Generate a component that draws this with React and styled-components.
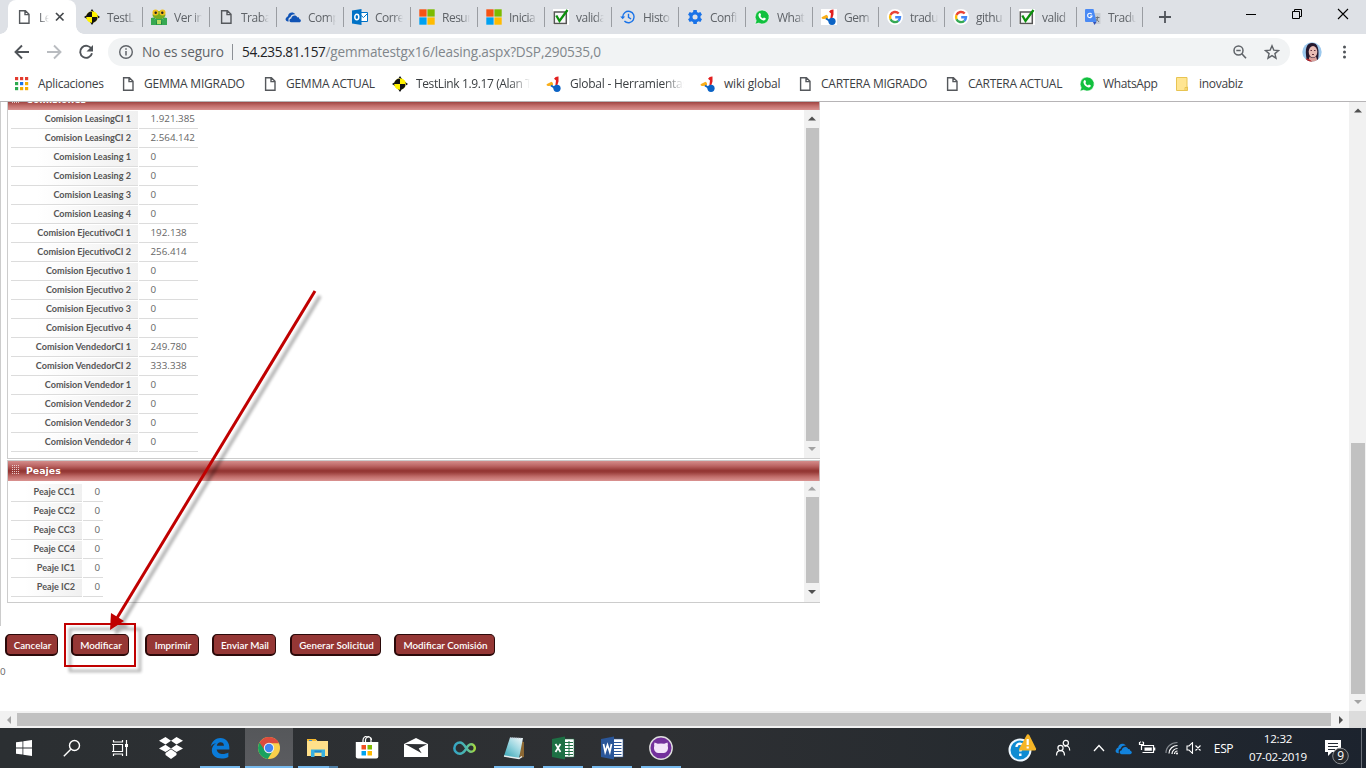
import React from "react";
import styled, { createGlobalStyle, css } from "styled-components";

const GlobalStyle = createGlobalStyle`
  * { box-sizing: border-box; }
  html, body { margin: 0; padding: 0; }
  body { width: 1366px; height: 768px; overflow: hidden; background: #fff; }
  svg { display: block; flex: none; }
`;

const ui = `"Open Sans", "Noto Sans", sans-serif`;

const Screen = styled.div`
  position: relative;
  width: 1366px;
  height: 768px;
  display: flex;
  flex-direction: column;
  font-family: ${ui};
  white-space: nowrap;
  overflow: hidden;
`;

/* ---------- browser chrome ---------- */
const TabStrip = styled.div`
  display: flex;
  height: 34px;
  padding-left: 8px;
  background: #dee1e6;
`;
const Tab = styled.div`
  position: relative;
  display: flex;
  align-items: center;
  width: ${(p) => p.$w}px;
  height: 34px;
  padding-left: 8px;
  color: #5f6368;
  ${(p) =>
    p.$active
      ? css`
          background: #fff;
          border-radius: 8px 8px 0 0;
          &::before, &::after {
            content: "";
            position: absolute;
            bottom: 0;
            width: 8px;
            height: 8px;
          }
          &::before { left: -8px; background: radial-gradient(circle at 0 0, transparent 7.5px, #fff 8px); }
          &::after { right: -8px; background: radial-gradient(circle at 100% 0, transparent 7.5px, #fff 8px); }
        `
      : css`
          &::after {
            content: "";
            position: absolute;
            right: 0;
            top: 7px;
            width: 1px;
            height: 20px;
            background: #9a9da2;
          }
        `}
`;
const TabLabel = styled.span`
  width: ${(p) => p.$w || 28}px;
  margin-left: 7px;
  overflow: hidden;
  font-size: 12px;
  letter-spacing: -0.5px;
  mask-image: linear-gradient(to right, #000 ${(p) => (p.$w ? 10 : 68)}%, transparent);
`;
const NewTab = styled.div`
  width: 44px;
  display: flex;
  align-items: center;
  justify-content: center;
`;
const WindowButtons = styled.div`
  display: flex;
  margin-left: auto;
  width: 138px;
  height: 28px;
  align-items: center;
  & > * { width: 46px; }
`;
const Toolbar = styled.div`
  display: flex;
  align-items: center;
  height: 33px;
  padding: 4px 0 1px 14px;
  background: #fff;
`;
const NavIcons = styled.div`
  display: flex;
  gap: 16px;
  width: 94px;
`;
const AddressBar = styled.div`
  display: flex;
  align-items: center;
  width: 1182px;
  height: 28px;
  padding: 0 10px;
  border-radius: 14px;
  background: #f1f3f4;
  font-size: 13.6px;
  line-height: 18px;
`;
const Security = styled.span`
  width: 90px;
  margin-left: 8px;
  padding-bottom: 1px;
  color: #5f6368;
  letter-spacing: -0.12px;
`;
const AddressDivider = styled.span`
  width: 1px;
  height: 16px;
  margin-right: 9px;
  background: #8c9095;
`;
const Host = styled.span`
  padding-bottom: 1px;
  color: #202124;
  letter-spacing: -0.38px;
`;
const Path = styled.span`
  padding-bottom: 1px;
  color: #80868b;
  letter-spacing: -0.155px;
`;
const AddressActions = styled.div`
  display: flex;
  gap: 16px;
  margin-left: auto;
`;
const Avatar = styled.div`
  margin-left: 12px;
`;
const MenuDots = styled.div`
  margin-left: 14px;
`;
const Bookmarks = styled.div`
  display: flex;
  align-items: center;
  height: 35px;
  padding: 0 0 1px 14px;
  border-bottom: 1px solid #b6b4b6;
  background: #fff;
`;
const Bookmark = styled.div`
  display: flex;
  align-items: center;
  gap: 8px;
  width: ${(p) => p.$w}px;
  font-size: 12px;
  color: #3c4043;
  letter-spacing: ${(p) => p.$track}px;
`;
const BookmarkText = styled.span`
  ${(p) =>
    p.$clip &&
    css`
      width: 114px;
      overflow: hidden;
      mask-image: linear-gradient(to right, #000 82%, transparent);
    `}
`;

/* ---------- page ---------- */
const Viewport = styled.div`
  display: flex;
  height: 609px;
`;
const Page = styled.div`
  width: 1349px;
  height: 609px;
  overflow: hidden;
`;
const PanelArea = styled.div`
  height: 524px;
  padding-left: 6px;
  border-left: 1px solid #ccc;
  overflow: hidden;
`;
const Panel = styled.section`
  width: 813px;
  margin-top: ${(p) => p.$shift}px;
  border: 1px solid #ccc;
  border-right: 0;
`;
const PanelHeader = styled.header`
  display: flex;
  align-items: center;
  gap: 7px;
  height: 20px;
  padding: 0 0 0 4px;
  border-right: 1px solid #c9b5b5;
  background: linear-gradient(#d48d8b, #bb6462 25%, #943633 48%, #963936 55%, #c06c69 78%, #da9391);
  color: #fff;
  font: bold 9.4px/18px "DejaVu Sans", sans-serif;
`;
const PanelBody = styled.div`
  display: flex;
  justify-content: space-between;
  height: ${(p) => p.$h}px;
`;
const Fields = styled.div`
  padding: ${(p) => p.$top}px 0 0 3px;
`;
const Field = styled.div`
  display: flex;
  gap: 1px;
  padding-top: 1px;
`;
const FieldLabel = styled.div`
  width: ${(p) => p.$w}px;
  height: 18px;
  padding-right: 7px;
  border-bottom: 1px solid #dcdcdc;
  background: linear-gradient(to right, #fff 20%, #f0f0f0);
  color: #555;
  font: bold 9.1px/16px Lato, sans-serif;
  text-align: right;
`;
const FieldValue = styled.div`
  width: ${(p) => p.$w}px;
  height: 18px;
  padding-left: 11.5px;
  border-bottom: 1px solid #dcdcdc;
  color: #666;
  font-size: 9.8px;
  line-height: 16px;
`;
const ButtonRow = styled.div`
  display: flex;
  height: 38px;
  padding: 8px 0 0 5px;
`;
const ActionButton = styled.button`
  width: ${(p) => p.$w}px;
  height: 22px;
  margin: 0 ${(p) => p.$gap}px 0 0;
  padding: 1px 0 0 1px;
  border: 1px solid #2a0909;
  border-width: 1px 1px 2px 2px;
  border-radius: 5px;
  background: #953735;
  color: #fff;
  font: 600 9.8px/17px Lato, sans-serif;
  white-space: nowrap;
`;
const Footnote = styled.div`
  color: #666;
  font-size: 9.8px;
  line-height: 15px;
`;

/* ---------- scrollbars ---------- */
const Track = styled.div`
  display: flex;
  flex: none;
  flex-direction: ${(p) => (p.$horizontal ? "row" : "column")};
  ${(p) => (p.$horizontal ? "height" : "width")}: ${(p) => p.$size}px;
  background: #f1f1f1;
`;
const ArrowBox = styled.div`
  display: flex;
  align-items: center;
  justify-content: center;
  flex: none;
  ${(p) => (p.$horizontal ? "width" : "height")}: ${(p) => p.$len}px;
`;
const Thumb = styled.div`
  flex: none;
  background: #c1c1c1;
  ${(p) =>
    p.$horizontal
      ? css`margin: 2px 0 2px ${p.$offset}px; width: ${p.$len}px;`
      : css`margin: ${p.$offset}px 1px 0 2px; height: ${p.$len}px;`}
`;
const Filler = styled.div`
  flex: 1;
`;
const BottomBar = styled.div`
  display: flex;
  height: 17px;
  & > :first-child { flex: 1; }
`;
const Corner = styled.div`
  width: 17px;
  background: #dcdcdc;
`;

const arrows = {
  up: "M0 5.500 4 1.500 8 5.500Z",
  down: "M0 1 4 5 8 1Z",
  left: "M6 0 2 4 6 8Z",
  right: "M2 0 6 4 2 8Z",
};
function Arrow({ dir, dark }) {
  return (
    <svg width="8" height="8" viewBox="0 0 8 8">
      <path d={arrows[dir]} fill={dark ? "#505050" : "#a3a3a3"} />
    </svg>
  );
}
function Scrollbar({ horizontal, size, len, offset = 0, startDark, endDark, box = 17, endBox = 17 }) {
  return (
    <Track $horizontal={horizontal} $size={size}>
      <ArrowBox $horizontal={horizontal} $len={box}>
        <Arrow dir={horizontal ? "left" : "up"} dark={startDark} />
      </ArrowBox>
      <Thumb $horizontal={horizontal} $len={len} $offset={offset} />
      <Filler />
      <ArrowBox $horizontal={horizontal} $len={endBox}>
        <Arrow dir={horizontal ? "right" : "down"} dark={endDark} />
      </ArrowBox>
    </Track>
  );
}

/* ---------- site icons ---------- */
const Icon16 = ({ children, size = 16, box = 16 }) => (
  <svg width={size} height={size} viewBox={`0 0 ${box} ${box}`}>{children}</svg>
);
const DocIcon = () => (
  <Icon16>
    <path d="M3.6 1.7h5.8l3.6 3.6v8.900H3.600zM9 1.900v3.700h3.800" fill="none" stroke="#55585c" strokeWidth="1.400" />
  </Icon16>
);
const TargetIcon = () => (
  <Icon16>
    <circle cx="8" cy="8" r="5.800" fill="#fff200" />
    <path d="M8 2.200A5.800 5.800 0 0 0 2.200 8H8zM8 13.800A5.800 5.800 0 0 0 13.800 8H8zM6 3 8 0l2 3zM6 13l2 3 2-3zM3 6 0 8l3 2zM13 6l3 2-3 2z" fill="#111" />
    <path d="M8 .8V8h5.800A5.800 5.800 0 0 0 8 2.200zM8 15.200V8H2.200A5.800 5.800 0 0 0 8 13.800z" fill="#fff200" />
  </Icon16>
);
const FrogIcon = () => (
  <Icon16>
    <path d="M0 9 5 8 3 12 0 13zM16 9 11 8 13 12 16 13zM5 8h6l2 8H3z" fill="#36a852" />
    <path d="M2 15.500 5 10l1 5.500zM14 15.500 11 10l-1 5.500z" fill="#1d7b39" />
    <path d="M0 12 5 10v6H0zM16 12l-5-2v6h5z" fill="#36a852" />
    <ellipse cx="8" cy="6" rx="6.500" ry="4" fill="#76ad20" />
    <circle cx="4.500" cy="3.500" r="3" fill="#f0bf1c" />
    <circle cx="11.500" cy="3.500" r="3" fill="#f0bf1c" />
    <circle cx="4.700" cy="3.700" r="1.200" fill="#222" />
    <circle cx="11.300" cy="3.700" r="1.200" fill="#222" />
    <path d="M6 11h4v4H6z" fill="#b7dd63" />
  </Icon16>
);
const CloudIcon = ({ w = 16, color = "#1053b5" }) => (
  <svg width={w} height={w} viewBox="0 0 16 16">
    <path d="M3 12.500C.6 12.500-.2 10 1.300 8.700c.3-1 1-1.300 1.700-1.300C3 4 7.500 2 10.300 5.200 7.500 5 6 6 5.500 8 3.700 8.500 3 10 3.700 12.500z" fill={color} />
    <path d="M6 13.300c-2.200-.2-2-3.500.3-3.700C6.500 6.300 11 5.200 12.400 8.400c1.600-.2 2 .8 1.900 1.600 2 .3 2.200 3-.2 3.300z" fill={color} />
  </svg>
);
const OutlookIcon = () => (
  <Icon16>
    <path d="M8 3.500h7.500v9H8z" fill="#fff" stroke="#0072c6" />
    <path d="m8.500 6 3 2.500 4-4" fill="none" stroke="#0072c6" />
    <path d="M0 1.500 9.500 0v16L0 14.500z" fill="#0072c6" />
    <ellipse cx="4.800" cy="8" rx="2" ry="2.700" fill="none" stroke="#fff" strokeWidth="1.500" />
  </Icon16>
);
const MicrosoftIcon = () => (
  <Icon16>
    <path d="M.3.300h7.300v7.300H.3z" fill="#f65314" />
    <path d="M8.400.300h7.300v7.300H8.400z" fill="#7cbb00" />
    <path d="M.3 8.400h7.300v7.300H.3z" fill="#00a1f1" />
    <path d="M8.400 8.400h7.300v7.300H8.400z" fill="#ffbb00" />
  </Icon16>
);
const CheckIcon = () => (
  <Icon16>
    <path d="M0 0h16v16H0z" fill="#fff" />
    <path d="M1.300 3h12v11.500h-12z" fill="#f8f8f8" stroke="#555" strokeWidth="1.500" />
    <path d="M3.300 6.500 6.500 12 14.500 1" fill="none" stroke="#0c900c" strokeWidth="2.300" />
  </Icon16>
);
const HistoryIcon = () => (
  <Icon16>
    <path d="M2.700 8a5.700 5.700 0 1 1 1.700 4.100M8.500 4.700v3.700l2.600 1.600" fill="none" stroke="#1a73e8" strokeWidth="1.400" />
    <path d="M.2 7.500h5L2.700 10.200z" fill="#1a73e8" />
  </Icon16>
);
const GearIcon = () => (
  <Icon16 box={24}>
    <path fill="#1a73e8" d="M21.500 13.400a9 9 0 0 0 0-2.800l2.300-1.800-2.400-4.200-2.800 1.100a9 9 0 0 0-2.300-1.300L15.900 1.500h-5l-.5 2.900a9 9 0 0 0-2.300 1.300L5.300 4.600 2.900 8.800l2.300 1.800a9 9 0 0 0 0 2.800l-2.300 1.800 2.400 4.200 2.800-1.100a9 9 0 0 0 2.300 1.300l.5 2.900h5l.4-2.900a9 9 0 0 0 2.300-1.300l2.800 1.100 2.400-4.200zM13.400 15.800a3.800 3.800 0 1 1 0-7.600 3.800 3.800 0 0 1 0 7.600z" transform="translate(-1.300)" />
  </Icon16>
);
const WhatsIcon = () => (
  <Icon16>
    <path d="M8 1a7 7 0 1 1-3.300 13.100L1 15.300l1.200-3.600A7 7 0 0 1 8 1z" fill="#11c03e" stroke="#fff" strokeWidth=".6" />
    <path d="M5.300 4.300c.6-.5 1-.4 1.300.4l.5 1.300-.7 1c.6 1.200 1.300 1.800 2.500 2.400l1-1 1.800.9c.2 2-1.500 2.600-3 2C6.500 10.500 5 9 4.500 6.800c-.2-1 .2-2 .8-2.500z" fill="#fff" />
  </Icon16>
);
const GxIcon = () => (
  <Icon16>
    <path d="M0 0h16v16H0z" fill="#fff" />
    <path d="M8 2.800Q9.500.300 12.500.5v5l-1.300 4-1.800-.5.600-4.500z" fill="#e21f1f" />
    <path d="M1 8 5.500 5.800q2.500 1.200 1 4L2 10Q-.3 9.200 1 8z" fill="#f9ae19" />
    <circle cx="11" cy="12.300" r="3.600" fill="#0b63c5" />
    <path d="m5 9.500 4 2.500" stroke="#0b63c5" strokeWidth="2" />
  </Icon16>
);
const GoogleIcon = () => (
  <Icon16>
    <circle cx="8" cy="8" r="8" fill="#fff" />
    <g fill="none" strokeWidth="2.400">
      <path d="M11.700 4.500A5 5 0 0 0 3.500 6" stroke="#ea4335" />
      <path d="M3.500 6a5 5 0 0 0 0 4.200" stroke="#fbbc05" />
      <path d="M3.500 10.200a5 5 0 0 0 7.800 1.700" stroke="#34a853" />
      <path d="M11.300 11.900A5 5 0 0 0 13 8.300H8.200" stroke="#4285f4" />
    </g>
  </Icon16>
);
const TranslateIcon = () => (
  <Icon16>
    <path d="M6 4h9.500v11H9z" fill="#c9cdd2" />
    <path d="M10.500 8.500h4M12.500 7.500v1.300c0 2-1 3-2 4M11 9.500l3 3.500" stroke="#6f757d" fill="none" />
    <path d="M8 13h3.500L9.500 16z" fill="#3350b5" />
    <path d="M1 0h7.500l3 13H1a1 1 0 0 1-1-1V1a1 1 0 0 1 1-1z" fill="#4a8af4" />
    <path d="M6.700 5.200A2.200 2.200 0 1 0 7 7H5" fill="none" stroke="#fff" strokeWidth="1.100" />
  </Icon16>
);
const AppsIcon = () => (
  <Icon16>
    {["#e33b2e", "#e33b2e", "#e33b2e", "#2da94f", "#1a73e8", "#f5ac00", "#2da94f", "#f5ac00", "#f5ac00"].map((c, i) => (
      <rect key={i} x={1 + (i % 3) * 5} y={1 + Math.floor(i / 3) * 5} width="3.200" height="3.200" fill={c} />
    ))}
  </Icon16>
);
const FolderIcon = () => (
  <Icon16>
    <path d="M1.500 1.500H12v9.500h.5v3.500h-11z" fill="#ffe591" stroke="#e8c452" />
    <path d="M10 14.500v-3h2v3" fill="none" stroke="#e8c452" />
  </Icon16>
);

/* ---------- taskbar ---------- */
const Taskbar = styled.div`
  display: flex;
  height: 40px;
  background: linear-gradient(to right, #2b2f32, #2e3033 48%, #252a2f 75%, #1c232e);
`;
const Task = styled.div`
  position: relative;
  display: flex;
  align-items: center;
  justify-content: center;
  width: ${(p) => p.$w || 49}px;
  height: 40px;
  ${(p) => p.$first && "margin-left: 2px;"}
  ${(p) => p.$active && "background: linear-gradient(#55575a, #5b5c60); width: 48px; margin-left: 1px;"}
  ${(p) =>
    p.$open &&
    css`
      &::after {
        content: "";
        position: absolute;
        left: ${p.$active ? 0 : 5}px;
        right: ${p.$active ? 0 : 4}px;
        bottom: 0;
        height: 2px;
        background: ${p.$split ? "linear-gradient(to right, #76b9ed 31px, #4f7fa6 31px)" : "#76b9ed"};
      }
    `}
`;
const Tray = styled.div`
  display: flex;
  align-items: center;
  margin-left: auto;
  width: 361px;
  color: #fff;
`;
const TrayItem = styled.div`
  display: flex;
  flex: none;
  justify-content: center;
  width: ${(p) => p.$w}px;
  padding-top: ${(p) => p.$drop || 0}px;
  font-size: 12px;
  letter-spacing: -0.4px;
`;
const Clock = styled.div`
  width: 70px;
  text-align: center;
  font-size: 11.6px;
  line-height: 18px;
  letter-spacing: -0.25px;
`;
const ShowDesktop = styled.div`
  width: 5px;
  height: 40px;
  margin-left: auto;
  border-left: 1px solid #6b7079;
`;

const T = ({ w = 24, h = 24, children }) => (
  <svg width={w} height={h} viewBox={`0 0 ${w} ${h}`} fill="none">{children}</svg>
);
const WindowsLogo = () => (
  <T w={16} h={16}><path fill="#fff" d="M0 2.300 6.500 1.400v6.200H0zM7.300 1.300 16 0v7.600H7.300zM0 8.400h6.500v6.200L0 13.700zM7.300 8.400H16V16l-8.700-1.300z" /></T>
);
const SearchGlyph = () => (
  <T w={18} h={18}><circle cx="11.500" cy="6.500" r="5" stroke="#fff" strokeWidth="1.400" /><path d="M7.800 10.200.8 17.200" stroke="#fff" strokeWidth="1.400" /></T>
);
const TaskViewGlyph = () => (
  <T w={18} h={18}><path d="M2.500 5.500h9v7h-9zM2.500 1v2h9V1M2.500 17v-2h9v2M15.500 1v16M1 5.500h2M1 12.500h2" stroke="#fff" strokeWidth="1.200" /><path d="M14 5h3v3h-3z" fill="#fff" /></T>
);
const Dropbox = () => (
  <T><g fill="#fff"><path d="m6.500 1 5.500 3.700L6.500 8.400 0 4.700zM17.500 1 24 4.700l-6.500 3.700L12 4.700zM6.500 8.700l5.500 3.700-5.500 3.700L0 12.400zM17.500 8.700l6.500 3.700-6.500 3.700-5.500-3.700zM6.500 17l5.500-3.700 5.500 3.700v2L12 23l-5.500-4z" /></g></T>
);
const Edge = () => (
  <T><path fill="#0a7bd9" transform="translate(1 1) scale(.94)" d="M1.800 10.500C3 4 7.500 1 12 1c6 0 10.200 4.500 9.700 12.200H8.200c.3 3.400 3.500 4.800 6.400 4.800 2.200 0 4.200-.6 6-1.600v5C18.500 22.500 16 23 13.500 23 7 23 3 19.500 3 14.200c0-3.200 1.700-6 4.500-7.500-3 .5-4.800 2-5.700 3.800zM8.300 9.200h7.600C15.800 6.800 14.600 5.600 12.300 5.600c-2.200 0-3.600 1.500-4 3.600z" /></T>
);
const Chrome = () => (
  <T>
    <circle cx="12" cy="12" r="11" fill="#f9d04b" />
    <path d="M12 12 2.500 6.500a11 11 0 0 0 8.200 16.400L16.500 14z" fill="#19a15f" />
    <path d="M2.500 6.500a11 11 0 0 1 19.500.7H12L7.500 14z" fill="#dc4b3e" />
    <circle cx="12" cy="12" r="5.200" fill="#f1f1f1" /><circle cx="12" cy="12" r="4.200" fill="#4285f4" />
  </T>
);
const Explorer = () => (
  <T><path d="M1 3.500h9l1.500 1.500H22v15H1z" fill="#ffe08a" /><path d="M1 3h9v2H1z" fill="#f5b82e" /><path d="M3 4h3v1H3z" fill="#3a8ed0" /><path d="M5 21v-7.500h14V21h-3.500v-4.500h-7V21z" fill="#38b1e1" /><path d="M8.500 14.500h7v2h-7z" fill="#2187c7" /></T>
);
const Store = () => (
  <T><path d="M8 7V4.200a4 4 0 0 1 8 0V7M10.500 7V4a3 3 0 0 1 6 0" stroke="#fff" strokeWidth="1.200" /><path d="M.8 6h22.500v14.500q0 2-2 2H2.800q-2 0-2-2z" fill="#fff" /><path d="M6.500 9H11v4.500H6.500z" fill="#f25022" /><path d="M12.500 9H17v4.500h-4.500z" fill="#7fba00" /><path d="M6.500 15H11v4.500H6.500z" fill="#00a4ef" /><path d="M12.500 15H17v4.500h-4.500z" fill="#ffb900" /></T>
);
const Mail = () => (
  <T><path d="M0 8 12 2l12 6v13H0z" fill="#fff" /><path d="m1 8 22 .3-8.300 4.200 3 4.700L1 8z" fill="#2e3033" /></T>
);
const Infinity2 = () => (
  <T>
    <defs><linearGradient id="inf" x1="0" x2="1"><stop offset="0" stopColor="#35a5c4" /><stop offset=".6" stopColor="#4fb9ac" /><stop offset="1" stopColor="#a6d93e" /></linearGradient></defs>
    <path d="M12 14.500C10 17 8.800 17.800 7 17.800a5.500 5.500 0 1 1 0-11.300c4.800 0 6.500 9.300 11 9.300a3.800 3.800 0 1 0 0-7.600c-2.500 0-4 2.300-6 6.300z" stroke="url(#inf)" strokeWidth="2.500" />
  </T>
);
const Notepad = () => (
  <T>
    <defs><linearGradient id="np" x1="0" y1="1" x2=".8" y2="0"><stop offset="0" stopColor="#2c9fb0" /><stop offset=".6" stopColor="#9cd7e1" /><stop offset="1" stopColor="#e6f3f5" /></linearGradient></defs>
    <path d="m17 5 5 1v15l-4 1z" fill="#8b6733" /><path d="M8 1.500 21 2l-4 20.500L2 20z" fill="url(#np)" /><path d="m2 20 15 2.500 3-2" stroke="#e8eef0" strokeWidth="1.500" /><path d="m8 2 12 .5" stroke="#ccd" strokeDasharray="1 1" />
  </T>
);
const OfficeIcon = ({ color, letter, children }) => (
  <T><path d="M12 3h11v18H12z" fill="#fff" stroke={color} strokeWidth=".6" />{children}<path d="M1 3 14 .5v23L1 21z" fill={color} /><path d={letter} stroke="#fff" strokeWidth="1.700" /></T>
);
const GitHub = () => (
  <T>
    <circle cx="12" cy="12" r="11.200" fill="#73309c" stroke="#ddd" strokeWidth="1.400" />
    <path d="m5.500 6.500 3.300 1.200q3.200-.5 6.400 0l3.300-1.200q.7 2 .2 3.500c1 2.700-.3 6.700-4 7H9.300c-3.700-.3-5-4.300-4-7q-.5-1.500.2-3.500z" fill="#f3e4fa" />
  </T>
);
const HelpIcon = () => (
  <T w={32} h={30}>
    <circle cx="14" cy="17" r="10.500" fill="#0e8bd2" stroke="#eef8ff" strokeWidth="2" />
    <path d="M10.500 14c0-4.800 7.500-4 6.500 0-.5 2-2.700 2-2.700 4.500M14.300 20.500V23" stroke="#fff" strokeWidth="2.400" />
    <path d="M21 1.500q1.500-1 2.500 1l6.500 13q.5 2-1 2H14q-1.500 0-.8-1.700z" fill="#f6b526" /><path d="M21.700 6v6M21.700 13.500v2" stroke="#fff" strokeWidth="2.200" />
  </T>
);
const People = () => (
  <T w={16} h={18}><g stroke="#fff" strokeWidth="1.200"><circle cx="5.500" cy="9" r="2.600" /><path d="M1.500 16.500c0-6.500 8-6.500 8 0" /><circle cx="10.800" cy="4" r="2.600" /><path d="M9.500 7.500c3-1.500 5.200.5 5.200 4" /></g></T>
);
const Battery = () => (
  <T w={18} h={14}><path d="M4 4.500h11.500v7H4.500M3.500 4v5M1.500 1v2.500h4V1M2.500.5v1M4.800.5v1" stroke="#fff" strokeWidth="1.200" /><path d="M6.500 6.500h7.300v3.200H6.500zM15.500 6.500h1.800v3h-1.800z" fill="#fff" /></T>
);
const Wifi = () => (
  <T w={14} h={14}><g strokeWidth="1.200"><path d="M1 12C1 6 6 1.500 12.500 1.500" stroke="#858a90" /><path d="M4 12.500c0-4.500 4-8 8.500-8M7 13c0-3 2.500-5.500 5.500-5.500M9.500 13c0-1.500 1.500-3 3-3" stroke="#fff" /></g><circle cx="12" cy="12.500" r="1" fill="#fff" /></T>
);
const Mute = () => (
  <T w={16} h={12}><path d="M1 4h2l3.500-3.300v10.600L3 8H1zM9.500 3.500l5 5M14.500 3.500l-5 5" stroke="#fff" strokeWidth="1.100" /></T>
);
const Notice = () => (
  <svg width="26" height="26" viewBox="0 0 26 26">
    <path d="M1 1h16v12H8l-4 4v-4H1z" fill="#fff" /><path d="M4 4.500h10M4 7.500h10M4 10.500h7" stroke="#222933" />
    <circle cx="16.500" cy="17" r="7.800" fill="#26292e" stroke="#8a8d91" />
    <text x="16.500" y="21.300" textAnchor="middle" fontFamily={ui} fontSize="12" fill="#fff">9</text>
  </svg>
);

/* ---------- data ---------- */
const tabs = [
  ["TestLink", TargetIcon], ["Ver inci", FrogIcon], ["Trabajo", DocIcon], ["Compar", CloudIcon], ["Correo", OutlookIcon],
  ["Resum", MicrosoftIcon], ["Inicia", MicrosoftIcon], ["valida", CheckIcon], ["Histo", HistoryIcon], ["Confi", GearIcon],
  ["What", WhatsIcon], ["Gem", GxIcon], ["tradu", GoogleIcon], ["githu", GoogleIcon], ["valid", CheckIcon], ["Tradu", TranslateIcon],
];
const bookmarks = [
  ["Aplicaciones", AppsIcon, 106, -0.3], ["GEMMA MIGRADO", DocIcon, 142, -0.22], ["GEMMA ACTUAL", DocIcon, 130, -0.27],
  ["TestLink 1.9.17 (Alan Tur", TargetIcon, 154, -0.38, true], ["Global - Herramientas", GxIcon, 154, -0.24, true],
  ["wiki global", GxIcon, 97, -0.2], ["CARTERA MIGRADO", DocIcon, 147, -0.25], ["CARTERA ACTUAL", DocIcon, 135, -0.3],
  ["WhatsApp", WhatsIcon, 96, -0.35], ["inovabiz", FolderIcon, 80, -0.3],
];
const comisiones = [
  ["LeasingCI 1", "1.921.385"], ["LeasingCI 2", "2.564.142"], ["Leasing 1", "0"], ["Leasing 2", "0"], ["Leasing 3", "0"], ["Leasing 4", "0"],
  ["EjecutivoCI 1", "192.138"], ["EjecutivoCI 2", "256.414"], ["Ejecutivo 1", "0"], ["Ejecutivo 2", "0"], ["Ejecutivo 3", "0"], ["Ejecutivo 4", "0"],
  ["VendedorCI 1", "249.780"], ["VendedorCI 2", "333.338"], ["Vendedor 1", "0"], ["Vendedor 2", "0"], ["Vendedor 3", "0"], ["Vendedor 4", "0"],
];
const peajes = ["CC1", "CC2", "CC3", "CC4", "IC1", "IC2"];
const buttons = [
  ["Cancelar", 53, 13], ["Modificar", 58, 16], ["Imprimir", 54, 13], ["Enviar Mail", 64, 14], ["Generar Solicitud", 91, 13], ["Modificar Comisión", 101, 0],
];

const Grip = () => (
  <svg width="7" height="12" viewBox="0 0 7 12">
    {[0, 1, 2, 3, 4].flatMap((r) => [0, 1, 2, 3].map((c) => <rect key={`${r}${c}`} x={c * 2} y={r * 2} width="1" height="1" fill="#e9c9c8" />))}
  </svg>
);

function FieldPanel({ title, shift, height, top, labelWidth, valueWidth, rows, scroll }) {
  return (
    <Panel $shift={shift}>
      <PanelHeader><Grip />{title}</PanelHeader>
      <PanelBody $h={height}>
        <Fields $top={top}>
          {rows.map(([label, value]) => (
            <Field key={label}>
              <FieldLabel $w={labelWidth}>{label}</FieldLabel>
              <FieldValue $w={valueWidth}>{value}</FieldValue>
            </Field>
          ))}
        </Fields>
        <Scrollbar size={16} {...scroll} />
      </PanelBody>
    </Panel>
  );
}

const Annotation = styled.svg`
  position: absolute;
  left: 0;
  top: 280px;
  pointer-events: none;
`;

function Callout() {
  return (
    <Annotation width="350" height="410" viewBox="0 280 350 410" fill="none">
      <defs><filter id="soft" x="-20%" y="-20%" width="140%" height="140%"><feGaussianBlur stdDeviation="1.400" /></filter></defs>
      <g transform="translate(5 5)" opacity=".3" filter="url(#soft)">
        <path d="M315 291 117 618" stroke="#000" strokeWidth="3.500" />
        <path d="m110 630 1-17 13 8z" fill="#000" />
        <path d="M65 624h70v42H65z" stroke="#000" strokeWidth="2.500" />
      </g>
      <path d="M315 291 117 618" stroke="#c00000" strokeWidth="3" />
      <path d="m110 630 1-17 13 8z" fill="#c00000" />
      <path d="M65 624h70v42H65z" stroke="#c00000" strokeWidth="2" />
    </Annotation>
  );
}

export default function App() {
  return (
    <Screen>
      <GlobalStyle />
      <TabStrip>
        <Tab $active $w={68}>
          <DocIcon />
          <TabLabel $w={10}>Leasing</TabLabel>
          <svg width="20" height="10" viewBox="-6 0 20 10"><path d="m1 1 7.500 7.500M8.500 1 1 8.500" stroke="#45484c" strokeWidth="1.700" /></svg>
        </Tab>
        {tabs.map(([label, Glyph], i) => (
          <Tab key={i} $w={i < 11 ? 67 : 66}>
            <Glyph />
            <TabLabel>{label}</TabLabel>
          </Tab>
        ))}
        <NewTab><svg width="12" height="12"><path d="M6 0v12M0 6h12" stroke="#50545a" strokeWidth="1.800" /></svg></NewTab>
        <WindowButtons>
          <svg height="12" viewBox="-23 -6 46 12"><path d="M-5 .5H5" stroke="#000" /></svg>
          <svg height="12" viewBox="-23 -6 46 12"><path d="M-4.500-2.500h7v7h-7zM-2.500-2.500v-2h7v7h-2" stroke="#000" fill="none" /></svg>
          <svg height="12" viewBox="-23 -6 46 12"><path d="m-5-5 10 10M5-5-5 5" stroke="#000" strokeWidth="1.100" /></svg>
        </WindowButtons>
      </TabStrip>

      <Toolbar>
        <NavIcons>
          <svg width="16" height="16"><path d="M15 8H2M8 1.500 1.500 8 8 14.500" fill="none" stroke="#505459" strokeWidth="1.900" /></svg>
          <svg width="16" height="16"><path d="M1 8h13M8 1.500 14.500 8 8 14.500" fill="none" stroke="#b9bcc0" strokeWidth="1.900" /></svg>
          <svg width="16" height="16"><path d="M13.500 5A6 6 0 1 0 14 9.300" fill="none" stroke="#505459" strokeWidth="1.900" /><path d="M15 1v6.500H8.500z" fill="#505459" /></svg>
        </NavIcons>
        <AddressBar>
          <svg width="16" height="16"><circle cx="8" cy="8" r="6.300" fill="none" stroke="#5f6368" strokeWidth="1.400" /><path d="M8 7v4.500M8 4.300v1.500" stroke="#5f6368" strokeWidth="1.500" /></svg>
          <Security>No es seguro</Security>
          <AddressDivider />
          <Host>54.235.81.157</Host>
          <Path>/gemmatestgx16/leasing.aspx?DSP,290535,0</Path>
          <AddressActions>
            <svg width="16" height="16"><circle cx="6.500" cy="6.500" r="4.500" fill="none" stroke="#5f6368" strokeWidth="1.500" /><path d="m9.800 9.800 4.200 4.400M4.300 6.500h4.400" stroke="#5f6368" strokeWidth="1.600" /></svg>
            <svg width="16" height="16"><path d="m8 1.800 1.800 4.300 4.700.4-3.600 3.100 1.100 4.600-4-2.500-4 2.500 1.100-4.600-3.600-3.100 4.700-.4z" fill="none" stroke="#5f6368" strokeWidth="1.400" /></svg>
          </AddressActions>
        </AddressBar>
        <Avatar>
          <svg width="20" height="20" viewBox="0 0 20 20">
            <clipPath id="face"><circle cx="10" cy="10" r="9.700" /></clipPath>
            <g clipPath="url(#face)">
              <path d="M0 0h20v20H0z" fill="#9cc8ed" /><path d="M5 19C2 6 5 1 10 1c6 0 7.500 6 6 17z" fill="#25182e" />
              <ellipse cx="11" cy="9.800" rx="4.300" ry="5.800" fill="#e8bcb4" /><path d="M7.500 14.500q3.500 3 6.500 0l2 6H6z" fill="#d8a09a" /><path d="M4 16.500q4 0 6 3.500H3z" fill="#b22228" />
              <path d="M8.500 8.500h1.500M12 8.500h1.500M10 12.500h2" stroke="#61333d" />
            </g>
          </svg>
        </Avatar>
        <MenuDots><svg width="16" height="16"><g fill="#505459"><circle cx="8.500" cy="3" r="1.500" /><circle cx="8.500" cy="8" r="1.500" /><circle cx="8.500" cy="13" r="1.500" /></g></svg></MenuDots>
      </Toolbar>

      <Bookmarks>
        {bookmarks.map(([label, Glyph, w, track, clip]) => (
          <Bookmark key={label} $w={w} $track={track}>
            <Glyph />
            <BookmarkText $clip={clip}>{label}</BookmarkText>
          </Bookmark>
        ))}
      </Bookmarks>

      <Viewport>
        <Page>
          <PanelArea>
            <FieldPanel
              title="Comisiones" shift={-13} height={348} top={0} labelWidth={127} valueWidth={59}
              rows={comisiones.map(([l, v]) => [`Comision ${l}`, v])}
              scroll={{ len: 313, box: 18, startDark: true }}
            />
            <FieldPanel
              title="Peajes" shift={1} height={121} top={2} labelWidth={71} valueWidth={20}
              rows={peajes.map((l) => [`Peaje ${l}`, "0"])}
              scroll={{ len: 86, box: 16, endBox: 19, endDark: true }}
            />
          </PanelArea>
          <ButtonRow>
            {buttons.map(([label, w, gap]) => (
              <ActionButton key={label} $w={w} $gap={gap}>{label}</ActionButton>
            ))}
          </ButtonRow>
          <Footnote>0</Footnote>
        </Page>
        <Scrollbar size={17} len={251} offset={324} startDark />
      </Viewport>
      <BottomBar>
        <Scrollbar horizontal size={17} len={1314} endDark />
        <Corner />
      </BottomBar>

      <Taskbar>
        <Task $w={48}><WindowsLogo /></Task>
        <Task $w={48}><SearchGlyph /></Task>
        <Task $w={48}><TaskViewGlyph /></Task>
        <Task $first><Dropbox /></Task>
        <Task $open><Edge /></Task>
        <Task $open $active><Chrome /></Task>
        <Task $open $split><Explorer /></Task>
        <Task><Store /></Task>
        <Task><Mail /></Task>
        <Task><Infinity2 /></Task>
        <Task $open><Notepad /></Task>
        <Task $open>
          <OfficeIcon color="#1d7044" letter="m4.500 8 5 8M9.500 8l-5 8"><path d="M14 6.500h8M14 9.500h8M14 12.500h8M14 15.500h8M14 18.500h8M18 5v15" stroke="#1d7044" /></OfficeIcon>
        </Task>
        <Task $open>
          <OfficeIcon color="#2a5699" letter="m3.500 8 1.700 8L7.500 9l2.300 7 1.700-8"><path d="M14 6.500h7.500M14 9.500h7.500M14 12.500h7.500M14 15.500h7.500M14 18.500h7.500" stroke="#2a5699" /></OfficeIcon>
        </Task>
        <Task $open><GitHub /></Task>
        <Tray>
          <TrayItem $w={34}><HelpIcon /></TrayItem>
          <TrayItem $w={48}><People /></TrayItem>
          <TrayItem $w={24}><svg width="12" height="8"><path d="m1 7 5-5.500L11 7" fill="none" stroke="#fff" strokeWidth="1.300" /></svg></TrayItem>
          <TrayItem $w={24}><CloudIcon w={17} color="#1283dd" /></TrayItem>
          <TrayItem $w={24}><Battery /></TrayItem>
          <TrayItem $w={25}><Wifi /></TrayItem>
          <TrayItem $w={20}><Mute /></TrayItem>
          <TrayItem $w={39}>ESP</TrayItem>
          <Clock>12:32<br />07-02-2019</Clock>
          <TrayItem $w={48} $drop={7}><Notice /></TrayItem>
          <ShowDesktop />
        </Tray>
      </Taskbar>
      <Callout />
    </Screen>
  );
}
